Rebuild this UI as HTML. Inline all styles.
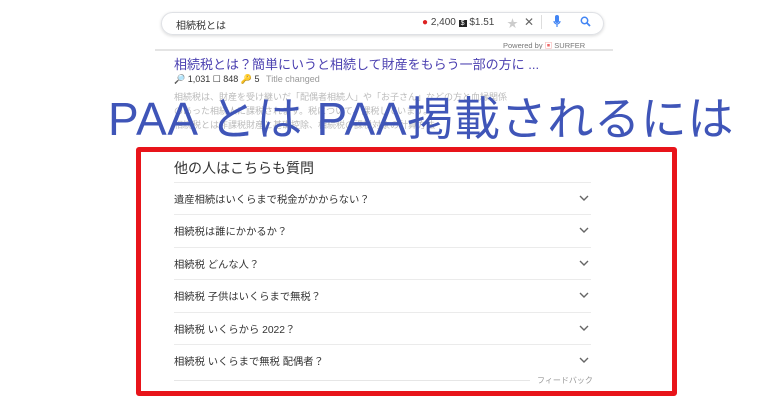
<!DOCTYPE html>
<html><head><meta charset="utf-8"><style>
*{margin:0;padding:0;box-sizing:border-box}
body{width:768px;height:403px;background:#fff;position:relative;overflow:hidden;font-family:"Liberation Sans","Noto Sans CJK JP",sans-serif}
.a{position:absolute;white-space:nowrap}
.search{left:161px;top:12px;width:443px;height:23px;border:1px solid #dfe1e5;border-radius:12px;box-shadow:0 1px 3px rgba(0,0,0,.15)}
.sep{left:155px;top:49px;width:458px;height:2px;background:#e4e4e4}
.box{left:136px;top:147px;width:541px;height:249px;border:5px solid #e8141a;border-radius:3px}
.q{left:174px;font-size:10.3px;color:#333}
.hr{left:174px;width:417px;height:1px;background:#ebebeb}
.ch{left:579px;width:10px;height:6px}
</style></head><body>
<div class="a search"></div>
<div class="a" style="left:176px;top:17px;font-size:10px;color:#333">相続税とは</div>
<div class="a" style="left:422px;top:17px;font-size:10px;color:#444"><span style="color:#d22">●</span> 2,400 <span style="background:#222;color:#fff;font-size:7px;padding:0 2px">$</span> $1.51</div>
<div class="a" style="left:507px;top:15px;font-size:11px;color:#ccc">★</div>
<div class="a" style="left:524px;top:15px;font-size:12px;color:#666">✕</div>
<div class="a" style="left:541px;top:15px;width:1px;height:14px;background:#ddd"></div>
<svg class="a" style="left:553px;top:15px" width="8" height="14" viewBox="0 0 8 14"><rect x="2" y="0" width="4" height="8" rx="2" fill="#4285f4"/><path d="M1 6a3 3 0 0 0 6 0M4 9v3" stroke="#4285f4" stroke-width="1.2" fill="none"/></svg>
<svg class="a" style="left:580px;top:16px" width="11" height="11" viewBox="0 0 11 11"><circle cx="4.5" cy="4.5" r="3.2" stroke="#4285f4" stroke-width="1.5" fill="none"/><path d="M7 7l3 3" stroke="#4285f4" stroke-width="1.8"/></svg>
<div class="a" style="left:503px;top:40px;font-size:7.5px;color:#777">Powered by <span style="color:#e66">▣</span> SURFER</div>
<div class="a sep"></div>
<div class="a" style="left:174px;top:54px;font-size:13px;color:#4a3fb0">相続税とは？簡単にいうと相続して財産をもらう一部の方に ...</div>
<div class="a" style="left:174px;top:74px;font-size:9px;color:#333">🔎 1,031 ☐ 848 🔑 5 <span style="color:#999;margin-left:4px">Title changed</span></div>
<div class="a" style="left:174px;top:90px;font-size:9px;color:#bbb;line-height:14px">相続税は、財産を受け継いだ「配偶者相続人」や「お子さん」などの方と血縁関係<br>のあった相続人に課税されます。税について、課税しています。<br>相続税とは非課税財産と基礎控除、相続税の課税対象の計算方法</div>
<div class="a" style="left:108px;top:83px;font-size:46px;color:#3f55b8;letter-spacing:0.7px">PAA とは PAA掲載されるには</div>
<div class="a box"></div>
<div class="a" style="left:174px;top:158px;font-size:14px;color:#333">他の人はこちらも質問</div>
<div class="a hr" style="top:182px"></div>
<div class="a q" style="top:191px">遺産相続はいくらまで税金がかからない？</div>
<div class="a hr" style="top:214px"></div>
<div class="a q" style="top:223px">相続税は誰にかかるか？</div>
<div class="a hr" style="top:247px"></div>
<div class="a q" style="top:256px">相続税 どんな人？</div>
<div class="a hr" style="top:279px"></div>
<div class="a q" style="top:288px">相続税 子供はいくらまで無税？</div>
<div class="a hr" style="top:312px"></div>
<div class="a q" style="top:321px">相続税 いくらから 2022？</div>
<div class="a hr" style="top:344px"></div>
<div class="a q" style="top:353px">相続税 いくらまで無税 配偶者？</div>
<svg class="a ch" style="top:195px" viewBox="0 0 10 6"><path d="M1 1l4 4 4-4" stroke="#666" stroke-width="1.4" fill="none"/></svg>
<svg class="a ch" style="top:227px" viewBox="0 0 10 6"><path d="M1 1l4 4 4-4" stroke="#666" stroke-width="1.4" fill="none"/></svg>
<svg class="a ch" style="top:260px" viewBox="0 0 10 6"><path d="M1 1l4 4 4-4" stroke="#666" stroke-width="1.4" fill="none"/></svg>
<svg class="a ch" style="top:292px" viewBox="0 0 10 6"><path d="M1 1l4 4 4-4" stroke="#666" stroke-width="1.4" fill="none"/></svg>
<svg class="a ch" style="top:325px" viewBox="0 0 10 6"><path d="M1 1l4 4 4-4" stroke="#666" stroke-width="1.4" fill="none"/></svg>
<svg class="a ch" style="top:357px" viewBox="0 0 10 6"><path d="M1 1l4 4 4-4" stroke="#666" stroke-width="1.4" fill="none"/></svg>
<div class="a" style="left:174px;top:380px;width:356px;height:1px;background:#e6e6e6"></div>
<div class="a" style="left:537px;top:375px;font-size:8px;color:#999">フィードバック</div>
</body></html>
